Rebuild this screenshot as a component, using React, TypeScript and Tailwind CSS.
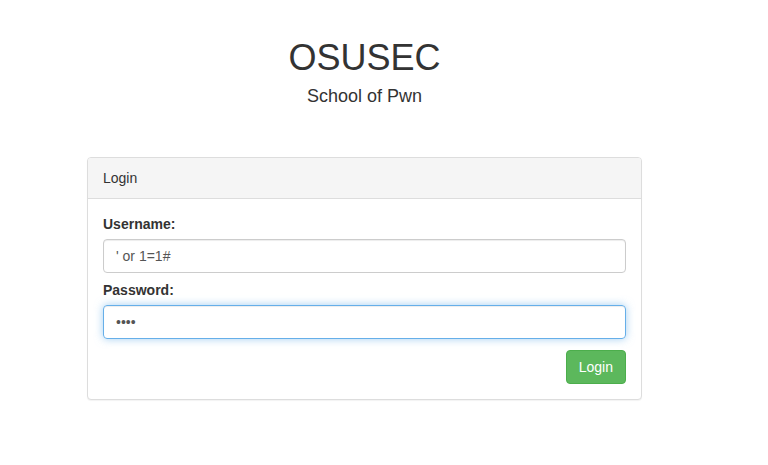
import React from "react";

export default function App() {
  return (
    <div className="min-h-[465px] w-full bg-white font-['Liberation_Sans',Arial,sans-serif] text-[14px] text-[#333]">
      <div className="w-[729px] flex flex-col items-center">
        <h1 className="mt-[38px] text-[36px] leading-[1.1] font-normal">OSUSEC</h1>
        <h4 className="mt-[9px] text-[18px] leading-[1.1]">School of Pwn</h4>

        <div className="mt-[51px] w-[555px] rounded-[4px] border border-[#ddd] bg-white shadow-[0_1px_1px_rgba(0,0,0,0.05)]">
          <div className="rounded-t-[3px] border-b border-[#ddd] bg-[#f5f5f5] px-[15px] py-[10px] leading-[20px]">
            Login
          </div>
          <form className="p-[15px]" onSubmit={(e) => e.preventDefault()}>
            <div className="mb-[7px]">
              <label className="mb-[5px] block font-bold leading-[20px]">Username:</label>
              <input
                type="text"
                defaultValue="' or 1=1#"
                className="block h-[34px] w-full rounded-[4px] border border-[#ccc] px-[12px] py-[6px] text-[14px] text-[#555] shadow-[inset_0_1px_1px_rgba(0,0,0,0.075)] outline-none"
              />
            </div>
            <div className="mb-[11px]">
              <label className="mb-[5px] block font-bold leading-[20px]">Password:</label>
              <input
                type="password"
                defaultValue="1234"
                className="block h-[34px] w-full rounded-[4px] border border-[#66afe9] px-[12px] py-[6px] text-[14px] text-[#555] shadow-[inset_0_1px_1px_rgba(0,0,0,0.075),0_0_8px_rgba(102,175,233,0.6)] outline-none"
              />
            </div>
            <div className="flex justify-end">
              <button
                type="submit"
                className="h-[34px] rounded-[4px] border border-[#4cae4c] bg-[#5cb85c] px-[12px] text-[14px] leading-[20px] text-white"
              >
                Login
              </button>
            </div>
          </form>
        </div>
      </div>
    </div>
  );
}
